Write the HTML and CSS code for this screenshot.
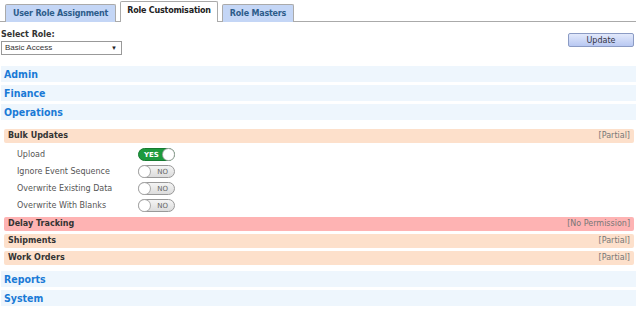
FILE: index.html
```html
<!DOCTYPE html>
<html lang="en">
<head>
    <meta charset="UTF-8">
    <title>Role Customisation</title>
    <link rel="stylesheet" href="styles.css">
</head>
<body>
    <div class="tabs">
        <div class="tab">User Role Assignment</div>
        <div class="tab active">Role Customisation</div>
        <div class="tab">Role Masters</div>
    </div>

    <div class="toolbar">
        <div class="role-pick">
            <label>Select Role:</label>
            <div class="select">Basic Access<span class="arrow">&#9660;</span></div>
        </div>
        <button class="update">Update</button>
    </div>

    <div class="modules">
        <div class="module">Admin</div>
        <div class="module">Finance</div>
        <div class="module">Operations</div>

        <div class="groups">
            <div class="group partial">
                <span>Bulk Updates</span><span class="state">[Partial]</span>
            </div>
            <div class="perms">
                <div class="perm"><span class="perm-name">Upload</span><span class="toggle on"><b>YES</b><i></i></span></div>
                <div class="perm"><span class="perm-name">Ignore Event Sequence</span><span class="toggle"><i></i><b>NO</b></span></div>
                <div class="perm"><span class="perm-name">Overwrite Existing Data</span><span class="toggle"><i></i><b>NO</b></span></div>
                <div class="perm"><span class="perm-name">Overwrite With Blanks</span><span class="toggle"><i></i><b>NO</b></span></div>
            </div>
            <div class="group denied">
                <span>Delay Tracking</span><span class="state">[No Permission]</span>
            </div>
            <div class="group partial">
                <span>Shipments</span><span class="state">[Partial]</span>
            </div>
            <div class="group partial">
                <span>Work Orders</span><span class="state">[Partial]</span>
            </div>
        </div>

        <div class="module">Reports</div>
        <div class="module">System</div>
    </div>
</body>
</html>
```

FILE: styles.css
```css
body {
    margin: 0;
    padding-top: 2px;
    font-family: "DejaVu Sans", Verdana, sans-serif;
    background: #fff;
    color: #333;
}
.tabs {
    display: flex;
    align-items: flex-end;
    gap: 4px;
    padding-left: 5px;
    width: 631px;
    border-bottom: 1px solid #aaa;
    height: 19px;
}
.tab {
    height: 17px;
    line-height: 17px;
    padding: 0 7px;
    font-size: 8px;
    font-weight: bold;
    letter-spacing: -0.2px;
    color: #2d5c8a;
    background: #c4d6f6;
    border: 1px solid #aaa;
    border-bottom: none;
    border-radius: 2px 2px 0 0;
    margin-bottom: -1px;
}
.tab.active {
    height: 20px;
    line-height: 17px;
    padding: 0 6px;
    background: #fff;
    color: #222;
}
.toolbar {
    display: flex;
    justify-content: space-between;
    padding: 7px 6px 0 1px;
}
.role-pick label {
    display: block;
    font-size: 8px;
    font-weight: bold;
    color: #333;
    height: 12px;
    line-height: 12px;
}
.select {
    width: 114px;
    height: 12px;
    line-height: 12px;
    padding: 0 2px 0 3px;
    border: 1px solid #999;
    font-family: "Liberation Sans", Arial, sans-serif;
    font-size: 8px;
    color: #333;
    display: flex;
    justify-content: space-between;
}
.arrow {
    font-size: 6px;
    color: #222;
    padding-right: 2px;
}
.update {
    margin-top: 4px;
    width: 66px;
    height: 14px;
    padding: 0;
    font-family: "DejaVu Sans", Verdana, sans-serif;
    font-size: 8px;
    color: #334;
    border: 1px solid #8b9bc4;
    border-radius: 2px;
    background: linear-gradient(#e2e9fb, #b8c8f2);
}
.modules {
    display: flex;
    flex-direction: column;
    gap: 3px;
    margin: 11px 4px 0 1px;
}
.module {
    height: 16px;
    line-height: 16px;
    padding-left: 3px;
    background: #eef6fd;
    color: #1a7ad6;
    font-family: "DejaVu Sans Condensed", "DejaVu Sans", sans-serif;
    font-size: 10.5px;
    font-weight: bold;
}
.groups {
    display: flex;
    flex-direction: column;
    gap: 3px;
    margin: 6px 2px 3px 3px;
}
.group {
    display: flex;
    justify-content: space-between;
    height: 14px;
    line-height: 14px;
    padding: 0 4px;
    border-radius: 2px;
    font-size: 8px;
    font-weight: bold;
    color: #333;
}
.group .state {
    font-weight: normal;
    color: #777;
}
.partial {
    background: #fde0cb;
}
.denied {
    background: #feb3b3;
}
.perms {
    padding: 0 0 0 13px;
}
.perm {
    display: flex;
    align-items: center;
    height: 17px;
}
.perm-name {
    width: 121px;
    font-size: 8px;
    color: #555;
}
.toggle {
    display: flex;
    align-items: center;
    justify-content: space-between;
    box-sizing: border-box;
    width: 37px;
    height: 13px;
    border: 1px solid #999;
    border-radius: 7px;
    background: linear-gradient(#f4f4f4, #dcdcdc);
    padding: 0 6px 0 0;
}
.toggle b {
    font-size: 7px;
    font-weight: normal;
    color: #666;
}
.toggle i {
    display: block;
    width: 11px;
    height: 11px;
    border-radius: 50%;
    background: #fff;
    box-shadow: 0 0 0 1px #aaa;
}
.toggle.on {
    background: #1d9a3e;
    border-color: #167a30;
    padding: 0 0 0 5px;
}
.toggle.on b {
    color: #fff;
    font-weight: bold;
}
```
